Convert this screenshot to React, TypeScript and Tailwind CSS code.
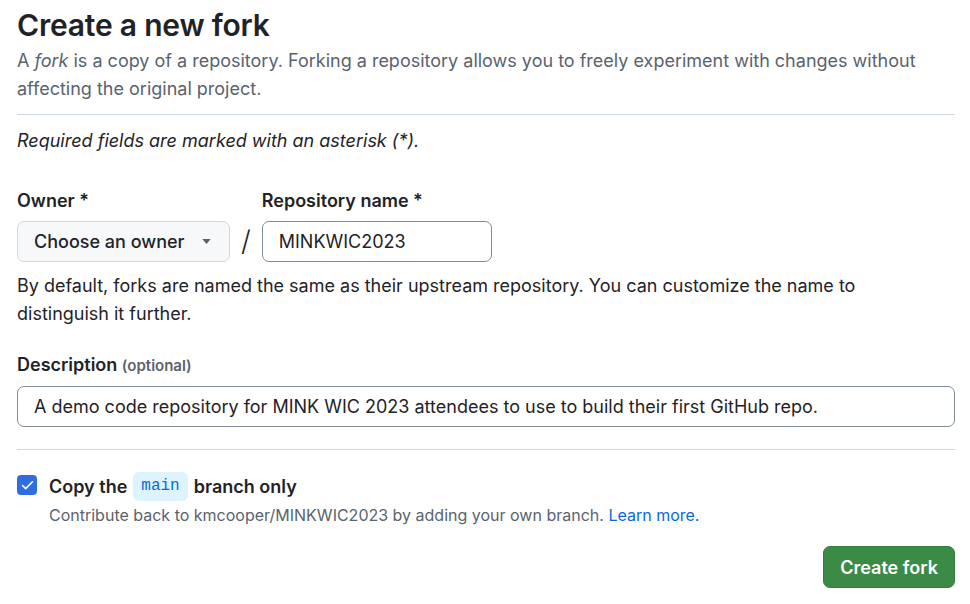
import { Check } from "lucide-react";

export default function App() {
    return (
        <div className="w-[970px] h-[604px] bg-white text-[#1f2328] pl-[17px] pr-[15px] overflow-hidden font-['Inter',sans-serif]">
            <h1 className="text-[30px] leading-[40px] font-semibold pt-[5px] tracking-[-0.2px]">Create a new fork</h1>
            <p className="text-[18px] leading-[28px] text-[#59636e] mt-[2px]">
                A <em>fork</em> is a copy of a repository. Forking a repository allows you to freely experiment with changes without
                <br />
                affecting the original project.
            </p>
            <div className="border-t border-[#d1d9e0] mt-[11px]" />

            <p className="italic text-[18px] leading-[28px] mt-[12px]">Required fields are marked with an asterisk (*).</p>

            <div className="flex items-end gap-[8px] mt-[35px]">
                <div className="flex flex-col">
                    <label className="text-[18px] leading-[22px] font-semibold mb-[9px]">Owner *</label>
                    <button className="h-[41px] w-[213px] flex items-center justify-between px-[16px] bg-[#f6f8fa] border border-[#d1d9e0] rounded-[7px] text-[18px] font-medium">
                        <span>Choose an owner</span>
                        <svg width="9" height="5" viewBox="0 0 10 6" className="mr-[2px]">
                            <path d="M0 0 L10 0 L5 6 Z" fill="#59636e" />
                        </svg>
                    </button>
                </div>
                <span className="text-[28px] leading-[41px] px-[3px] font-light">/</span>
                <div className="flex flex-col">
                    <label className="text-[18px] leading-[22px] font-semibold mb-[9px]">Repository name *</label>
                    <div className="h-[41px] w-[230px] flex items-center px-[16px] border border-[#818b98] rounded-[7px] text-[18px]">
                        MINKWIC2023
                    </div>
                </div>
            </div>

            <p className="text-[18px] leading-[28px] mt-[10px]">
                By default, forks are named the same as their upstream repository. You can customize the name to
                <br />
                distinguish it further.
            </p>

            <div className="mt-[25px]">
                <label className="text-[18px] leading-[22px] font-semibold">
                    Description <span className="text-[15px] text-[#59636e]">(optional)</span>
                </label>
                <div className="h-[41px] mt-[9px] flex items-center px-[16px] border border-[#818b98] rounded-[7px] text-[18px]">
                    A demo code repository for MINK WIC 2023 attendees to use to build their first GitHub repo.
                </div>
            </div>

            <div className="border-t border-[#d1d9e0] mt-[22px]" />

            <div className="flex gap-[12px] mt-[22px]">
                <div className="w-[20px] h-[20px] mt-[3px] rounded-[4px] bg-[#2f6ee0] flex items-center justify-center shrink-0">
                    <Check size={15} strokeWidth={2.5} color="white" />
                </div>
                <div className="flex flex-col">
                    <div className="flex items-center text-[18px] leading-[29px] font-semibold">
                        Copy the
                        <code className="mx-[6px] h-[29px] px-[8px] flex items-center rounded-[6px] bg-[#ddf4ff] text-[#0969da] text-[16px] font-normal font-['Liberation_Mono',monospace]">
                            main
                        </code>
                        branch only
                    </div>
                    <p className="text-[16px] leading-[22px] text-[#59636e] mt-[3px]">
                        Contribute back to kmcooper/MINKWIC2023 by adding your own branch.{" "}
                        <a className="text-[#0969da]">Learn more.</a>
                    </p>
                </div>
            </div>

            <div className="flex justify-end mt-[20px]">
                <button className="h-[42px] px-[16px] bg-[#3b8a46] text-white rounded-[7px] text-[18px] font-semibold border border-[#357d3f]">
                    Create fork
                </button>
            </div>
        </div>
    );
}
